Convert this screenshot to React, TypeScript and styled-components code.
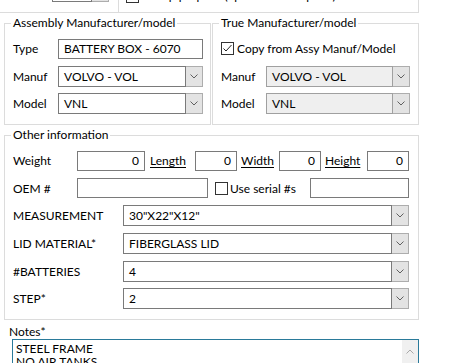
import React from 'react'
import styled, { createGlobalStyle } from 'styled-components'

const GlobalStyle = createGlobalStyle`
  body {
    margin: 0;
    background: #fff;
    color: #000;
    font-family: Lato, "Noto Sans", "Liberation Sans", sans-serif;
    font-size: 12px;
  }
`

const Page = styled.div`
  width: 462px;
  height: 363px;
  overflow: hidden;
`

// Bottom edge of the section above, mostly scrolled out of view
const TopStrip = styled.div`
  display: flex;
  width: 419px;
  height: 13px;
  box-sizing: border-box;
  border-right: 1px solid #dcdcdc;
  border-bottom: 1px solid #dcdcdc;
  overflow: hidden;
`

const TopPart = styled.div<{ $width: number; $divider?: boolean; $pad: number }>`
  display: flex;
  align-items: flex-end;
  gap: 3px;
  width: ${({ $width }) => $width}px;
  padding-bottom: ${({ $pad }) => $pad}px;
  padding-left: ${({ $divider }) => ($divider ? 7 : 52)}px;
  box-sizing: border-box;
  border-left: ${({ $divider }) => ($divider ? '1px solid #dcdcdc' : 'none')};
  white-space: nowrap;
`

const TopText = styled.span`
  line-height: 15px;
  margin-bottom: 0;
`

const Row2 = styled.div`
  display: flex;
  margin-top: 3px;
  width: 419px;
  justify-content: space-between;
  padding-left: 4px;
  box-sizing: border-box;
`

const GroupBox = styled.fieldset<{ $width: number }>`
  margin: 0;
  min-width: 0;
  width: ${({ $width }) => $width}px;
  box-sizing: border-box;
  border: 1px solid #dcdcdc;
  padding: 8px 8px 10px 8px;
`

const Legend = styled.legend`
  margin-left: -2px;
  padding: 0 2px;
  line-height: 14px;
`

const Stack = styled.div`
  display: flex;
  flex-direction: column;
  gap: 6.6px;
`

const Row = styled.div`
  display: flex;
  align-items: center;
  height: 21px;
`

const Label = styled.span<{ $width: number }>`
  width: ${({ $width }) => $width}px;
  flex-shrink: 0;
  white-space: nowrap;
`

const LinkLabel = styled.span<{ $width: number; $pad: number }>`
  width: ${({ $width }) => $width}px;
  padding-left: ${({ $pad }) => $pad}px;
  box-sizing: border-box;
  flex-shrink: 0;
  text-decoration: underline;
  text-underline-offset: 2px;
`

const TextBox = styled.div<{ $width: number; $right?: boolean }>`
  width: ${({ $width }) => $width}px;
  height: 20px;
  box-sizing: border-box;
  border: 1px solid #7a7a7a;
  padding: 0 5px;
  display: flex;
  align-items: center;
  justify-content: ${({ $right }) => ($right ? 'flex-end' : 'flex-start')};
  white-space: nowrap;
  flex-shrink: 0;
`

const ComboFrame = styled.div<{ $width: number }>`
  display: flex;
  width: ${({ $width }) => $width}px;
  height: 21px;
  flex-shrink: 0;
`

const ComboText = styled.div<{ $disabled?: boolean }>`
  flex: 1;
  min-width: 0;
  border: 1px solid ${({ $disabled }) => ($disabled ? '#a0a0a0' : '#7a7a7a')};
  background: ${({ $disabled }) => ($disabled ? '#efefef' : '#fff')};
  padding-left: 5px;
  display: flex;
  align-items: center;
  white-space: nowrap;
  overflow: hidden;
`

const ComboButton = styled.div`
  width: 16px;
  border: 1px solid #adadad;
  border-left: none;
  background: #e3e3e3;
  display: flex;
  align-items: center;
  justify-content: center;
`

const CheckBox = styled.span`
  width: 13px;
  height: 13px;
  box-sizing: border-box;
  border: 1px solid #333;
  background: #fff;
  display: inline-flex;
  align-items: center;
  justify-content: center;
  flex-shrink: 0;
`

const CheckRow = styled.label<{ $gap?: number; $width?: number; $pad?: number; $align?: string }>`
  display: flex;
  align-items: ${({ $align }) => $align ?? 'center'};
  gap: ${({ $gap }) => $gap ?? 3}px;
  width: ${({ $width }) => ($width ? `${$width}px` : 'auto')};
  padding-left: ${({ $pad }) => $pad ?? 0}px;
  box-sizing: border-box;
  flex-shrink: 0;
  white-space: nowrap;
`

const NotesLabel = styled.div`
  margin: 4px 0 0 9px;
  line-height: 15px;
`

const NotesBox = styled.div`
  margin-left: 12px;
  width: 407px;
  height: 40px;
  box-sizing: border-box;
  border: 1px solid #2a7a9a;
  border-bottom: none;
  display: flex;
`

const NotesText = styled.div`
  flex: 1;
  padding: 2px 3px;
  line-height: 13px;
  white-space: pre;
`

const ScrollBar = styled.div`
  width: 16px;
  background: #f0f0f0;
  display: flex;
  justify-content: center;
  padding-top: 9px;
`

const Chevron = ({ up }: { up?: boolean }) => (
  <svg width="8" height="5" viewBox="0 0 8 5">
    <polyline
      points={up ? '0.5,4.5 4,1 7.5,4.5' : '0.5,0.5 4,4 7.5,0.5'}
      fill="none"
      stroke={up ? '#a8a8a8' : '#606060'}
      strokeWidth="1"
    />
  </svg>
)

const Check = () => (
  <svg width="11" height="11" viewBox="0 0 11 11">
    <polyline points="1.5,5.5 4,8 9.5,2" fill="none" stroke="#222" strokeWidth="1" />
  </svg>
)

const Combo = ({ value, width, disabled }: { value: string; width: number; disabled?: boolean }) => (
  <ComboFrame $width={width}>
    <ComboText $disabled={disabled}>{value}</ComboText>
    <ComboButton>
      <Chevron />
    </ComboButton>
  </ComboFrame>
)

const picks = [
  { label: 'MEASUREMENT', value: '30"X22"X12"' },
  { label: 'LID MATERIAL*', value: 'FIBERGLASS LID' },
  { label: '#BATTERIES', value: '4' },
  { label: 'STEP*', value: '2' },
]

export default function App() {
  return (
    <Page>
      <GlobalStyle />
      <TopStrip>
        <TopPart $width={118} $pad={10}>
          <Combo value="" width={57} />
        </TopPart>
        <TopPart $width={300} $pad={9} $divider>
          <CheckRow $align="flex-end">
            <CheckBox />
            <TopText>Set up purpose (optional for all parts)</TopText>
          </CheckRow>
        </TopPart>
      </TopStrip>

      <Row2>
        <GroupBox $width={207}>
          <Legend>Assembly Manufacturer/model</Legend>
          <Stack>
            <Row>
              <Label $width={45}>Type</Label>
              <TextBox $width={145}>BATTERY BOX - 6070</TextBox>
            </Row>
            <Row>
              <Label $width={45}>Manuf</Label>
              <Combo value="VOLVO - VOL" width={145} />
            </Row>
            <Row>
              <Label $width={45}>Model</Label>
              <Combo value="VNL" width={145} />
            </Row>
          </Stack>
        </GroupBox>

        <GroupBox $width={207}>
          <Legend>True Manufacturer/model</Legend>
          <Stack>
            <Row>
              <CheckRow>
                <CheckBox>
                  <Check />
                </CheckBox>
                Copy from Assy Manuf/Model
              </CheckRow>
            </Row>
            <Row>
              <Label $width={45}>Manuf</Label>
              <Combo value="VOLVO - VOL" width={144} disabled />
            </Row>
            <Row>
              <Label $width={45}>Model</Label>
              <Combo value="VNL" width={144} disabled />
            </Row>
          </Stack>
        </GroupBox>
      </Row2>

      <Row2>
        <GroupBox $width={415}>
          <Legend>Other information</Legend>
          <Stack>
            <Row>
              <Label $width={64}>Weight</Label>
              <TextBox $width={68} $right>0</TextBox>
              <LinkLabel $width={50} $pad={5}>Length</LinkLabel>
              <TextBox $width={42} $right>0</TextBox>
              <LinkLabel $width={42} $pad={4}>Width</LinkLabel>
              <TextBox $width={42} $right>0</TextBox>
              <LinkLabel $width={46} $pad={4}>Height</LinkLabel>
              <TextBox $width={42} $right>0</TextBox>
            </Row>
            <Row>
              <Label $width={64}>OEM #</Label>
              <TextBox $width={131} />
              <CheckRow $gap={2} $width={102} $pad={7}>
                <CheckBox />
                Use serial #s
              </CheckRow>
              <TextBox $width={99} />
            </Row>
            {picks.map((p) => (
              <Row key={p.label}>
                <Label $width={110}>{p.label}</Label>
                <Combo value={p.value} width={286} />
              </Row>
            ))}
          </Stack>
        </GroupBox>
      </Row2>

      <NotesLabel>Notes*</NotesLabel>
      <NotesBox>
        <NotesText>{'STEEL FRAME\nNO AIR TANKS'}</NotesText>
        <ScrollBar>
          <Chevron up />
        </ScrollBar>
      </NotesBox>
    </Page>
  )
}
